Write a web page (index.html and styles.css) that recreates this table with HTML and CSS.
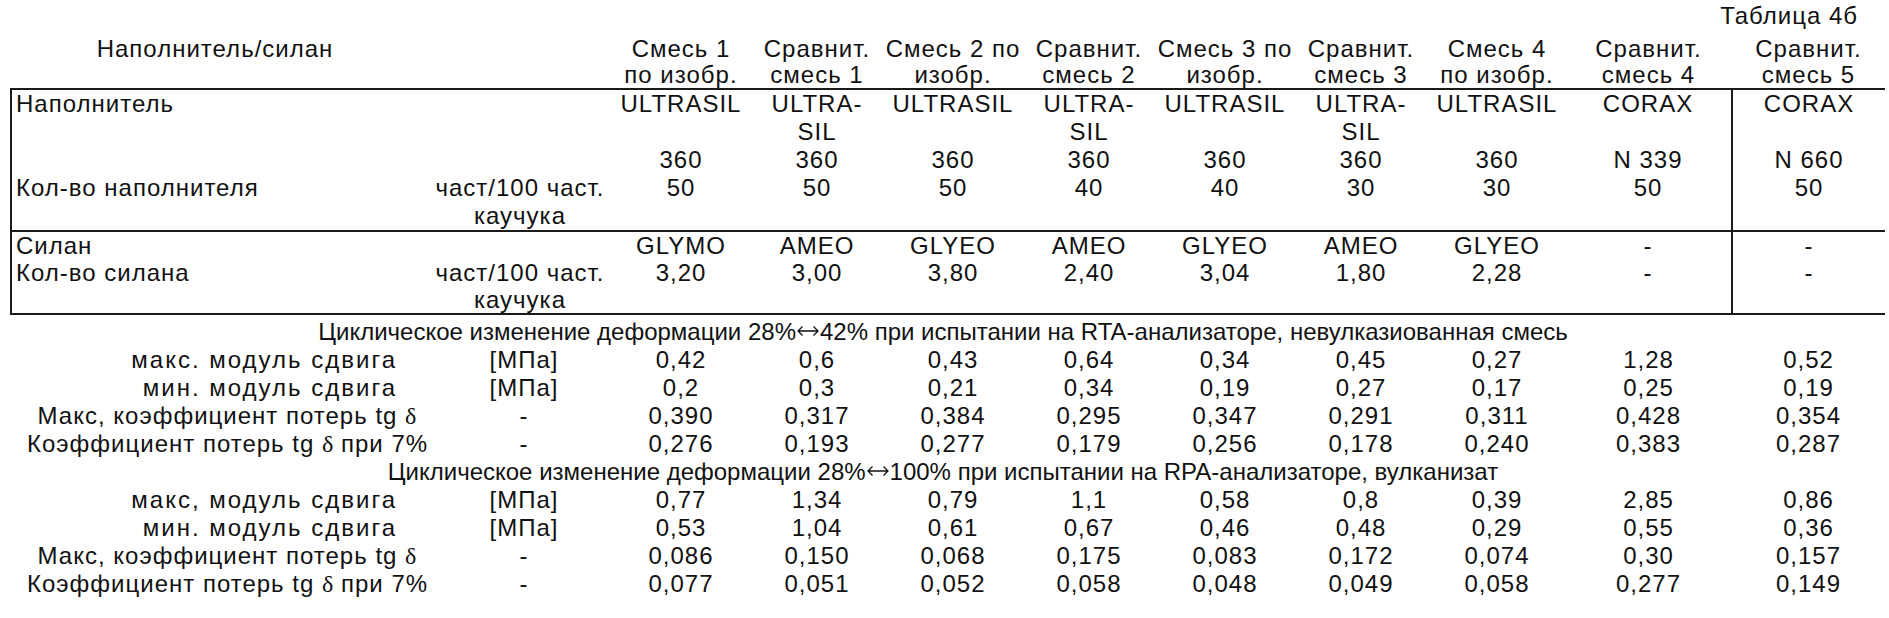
FILE: index.html
```html
<!DOCTYPE html>
<html lang="ru">
<head>
<meta charset="utf-8">
<title>Таблица 4б</title>
<link rel="stylesheet" href="styles.css">
</head>
<body>
<div class="page">
  <div class="caption">Таблица 4б</div>
  <table class="t">
    <colgroup>
      <col class="c-label"><col class="c-unit">
      <col class="c-num"><col class="c-num"><col class="c-num"><col class="c-num"><col class="c-num"><col class="c-num"><col class="c-num">
      <col class="c-wide"><col class="c-last">
    </colgroup>
    <thead>
      <tr class="hd">
        <th class="hl">Наполнитель/силан</th><th></th>
        <th>Смесь 1<br>по изобр.</th>
        <th>Сравнит.<br>смесь 1</th>
        <th>Смесь 2 по<br>изобр.</th>
        <th>Сравнит.<br>смесь 2</th>
        <th>Смесь 3 по<br>изобр.</th>
        <th>Сравнит.<br>смесь 3</th>
        <th>Смесь 4<br>по изобр.</th>
        <th>Сравнит.<br>смесь 4</th>
        <th>Сравнит.<br>смесь 5</th>
      </tr>
    </thead>
    <tbody class="box box1">
      <tr><td class="l">Наполнитель</td><td></td><td>ULTRASIL</td><td>ULTRA-</td><td>ULTRASIL</td><td>ULTRA-</td><td>ULTRASIL</td><td>ULTRA-</td><td>ULTRASIL</td><td>CORAX</td><td class="v">CORAX</td></tr>
      <tr><td class="l"></td><td></td><td></td><td>SIL</td><td></td><td>SIL</td><td></td><td>SIL</td><td></td><td></td><td class="v"></td></tr>
      <tr><td class="l"></td><td></td><td>360</td><td>360</td><td>360</td><td>360</td><td>360</td><td>360</td><td>360</td><td>N 339</td><td class="v">N 660</td></tr>
      <tr><td class="l">Кол-во наполнителя</td><td>част/100 част.</td><td>50</td><td>50</td><td>50</td><td>40</td><td>40</td><td>30</td><td>30</td><td>50</td><td class="v">50</td></tr>
      <tr><td class="l"></td><td>каучука</td><td></td><td></td><td></td><td></td><td></td><td></td><td></td><td></td><td class="v"></td></tr>
    </tbody>
    <tbody class="box box2">
      <tr><td class="l">Силан</td><td></td><td>GLYMO</td><td>AMEO</td><td>GLYEO</td><td>AMEO</td><td>GLYEO</td><td>AMEO</td><td>GLYEO</td><td>-</td><td class="v">-</td></tr>
      <tr><td class="l">Кол-во силана</td><td>част/100 част.</td><td>3,20</td><td>3,00</td><td>3,80</td><td>2,40</td><td>3,04</td><td>1,80</td><td>2,28</td><td>-</td><td class="v">-</td></tr>
      <tr><td class="l"></td><td>каучука</td><td></td><td></td><td></td><td></td><td></td><td></td><td></td><td></td><td class="v"></td></tr>
    </tbody>
    <tbody class="data">
      <tr class="ttl first"><td colspan="11">Циклическое изменение деформации 28%<svg class="arr" viewBox="0 0 22 12" aria-label="↔"><path d="M1 6H21M5.5 1.5L1 6L5.5 10.5M16.5 1.5L21 6L16.5 10.5"/></svg>42% при испытании на RTA-анализаторе, невулказиованная смесь</td></tr>
      <tr><td class="m mod">макс. модуль сдвига</td><td class="u">[МПа]</td><td>0,42</td><td>0,6</td><td>0,43</td><td>0,64</td><td>0,34</td><td>0,45</td><td>0,27</td><td>1,28</td><td>0,52</td></tr>
      <tr><td class="m mod">мин. модуль сдвига</td><td class="u">[МПа]</td><td>0,2</td><td>0,3</td><td>0,21</td><td>0,34</td><td>0,19</td><td>0,27</td><td>0,17</td><td>0,25</td><td>0,19</td></tr>
      <tr><td class="m">Макс, коэффициент потерь tg <span class="g">δ</span></td><td class="u">-</td><td>0,390</td><td>0,317</td><td>0,384</td><td>0,295</td><td>0,347</td><td>0,291</td><td>0,311</td><td>0,428</td><td>0,354</td></tr>
      <tr><td class="m">Коэффициент потерь tg <span class="g">δ</span> при 7%</td><td class="u">-</td><td>0,276</td><td>0,193</td><td>0,277</td><td>0,179</td><td>0,256</td><td>0,178</td><td>0,240</td><td>0,383</td><td>0,287</td></tr>
      <tr class="ttl"><td colspan="11">Циклическое изменение деформации 28%<svg class="arr" viewBox="0 0 22 12" aria-label="↔"><path d="M1 6H21M5.5 1.5L1 6L5.5 10.5M16.5 1.5L21 6L16.5 10.5"/></svg>100% при испытании на RPA-анализаторе, вулканизат</td></tr>
      <tr><td class="m mod">макс, модуль сдвига</td><td class="u">[МПа]</td><td>0,77</td><td>1,34</td><td>0,79</td><td>1,1</td><td>0,58</td><td>0,8</td><td>0,39</td><td>2,85</td><td>0,86</td></tr>
      <tr><td class="m mod">мин. модуль сдвига</td><td class="u">[МПа]</td><td>0,53</td><td>1,04</td><td>0,61</td><td>0,67</td><td>0,46</td><td>0,48</td><td>0,29</td><td>0,55</td><td>0,36</td></tr>
      <tr><td class="m">Макс, коэффициент потерь tg <span class="g">δ</span></td><td class="u">-</td><td>0,086</td><td>0,150</td><td>0,068</td><td>0,175</td><td>0,083</td><td>0,172</td><td>0,074</td><td>0,30</td><td>0,157</td></tr>
      <tr><td class="m">Коэффициент потерь tg <span class="g">δ</span> при 7%</td><td class="u">-</td><td>0,077</td><td>0,051</td><td>0,052</td><td>0,058</td><td>0,048</td><td>0,049</td><td>0,058</td><td>0,277</td><td>0,149</td></tr>
    </tbody>
  </table>
</div>
</body>
</html>
```

FILE: styles.css
```css
html, body {
  margin: 0;
  padding: 0;
  background: #fff;
}

.page {
  padding: 2px 0 0 10px;
  font-family: "Liberation Sans", Arial, sans-serif;
  font-size: 24px;
  letter-spacing: 1px;
  color: #111;
}

.caption {
  width: 1848px;
  text-align: right;
  line-height: 28px;
  margin-bottom: 6px;
}

.t {
  width: 1874px;
  table-layout: fixed;
  border-collapse: collapse;
  border-spacing: 0;
}

.c-label { width: 416px; }
.c-unit { width: 186px; }
.c-num { width: 136px; }
.c-wide { width: 167px; }
.c-last { width: 153px; }

.t th,
.t td {
  padding: 0;
  text-align: center;
  vertical-align: top;
  white-space: nowrap;
  font-weight: normal;
}

.hd th {
  line-height: 26px;
  height: 52px;
}

.hd .hl {
  padding-right: 8px;
}

.box td {
  line-height: 28px;
  height: 28px;
}

.box2 td {
  line-height: 27px;
  height: 27px;
}

.box {
  border-top: 2px solid #1a1a1a;
  border-left: 2px solid #1a1a1a;
}

.box2 {
  border-bottom: 2px solid #1a1a1a;
}

.box td.l {
  text-align: left;
  padding-left: 4px;
  border-left: 2px solid #1a1a1a;
}

.box td.v {
  border-left: 2px solid #1a1a1a;
}

.data td {
  line-height: 28px;
  height: 28px;
}

.data .first td {
  padding-top: 3px;
}

.data td.m {
  padding-left: 16px;
}

.data td.mod {
  text-align: right;
  padding: 0 30px 0 0;
  letter-spacing: 2px;
}

.data td.u {
  padding-left: 8px;
}

.ttl td {
  text-align: center;
  letter-spacing: 0;
  padding-right: 10px;
}

.g {
  font-family: "Liberation Serif", "Times New Roman", serif;
  letter-spacing: 0;
}

.arr {
  width: 22px;
  height: 12px;
  margin: 0 1px;
  vertical-align: 3px;
  fill: none;
  stroke: #111;
  stroke-width: 1.3;
}
```
